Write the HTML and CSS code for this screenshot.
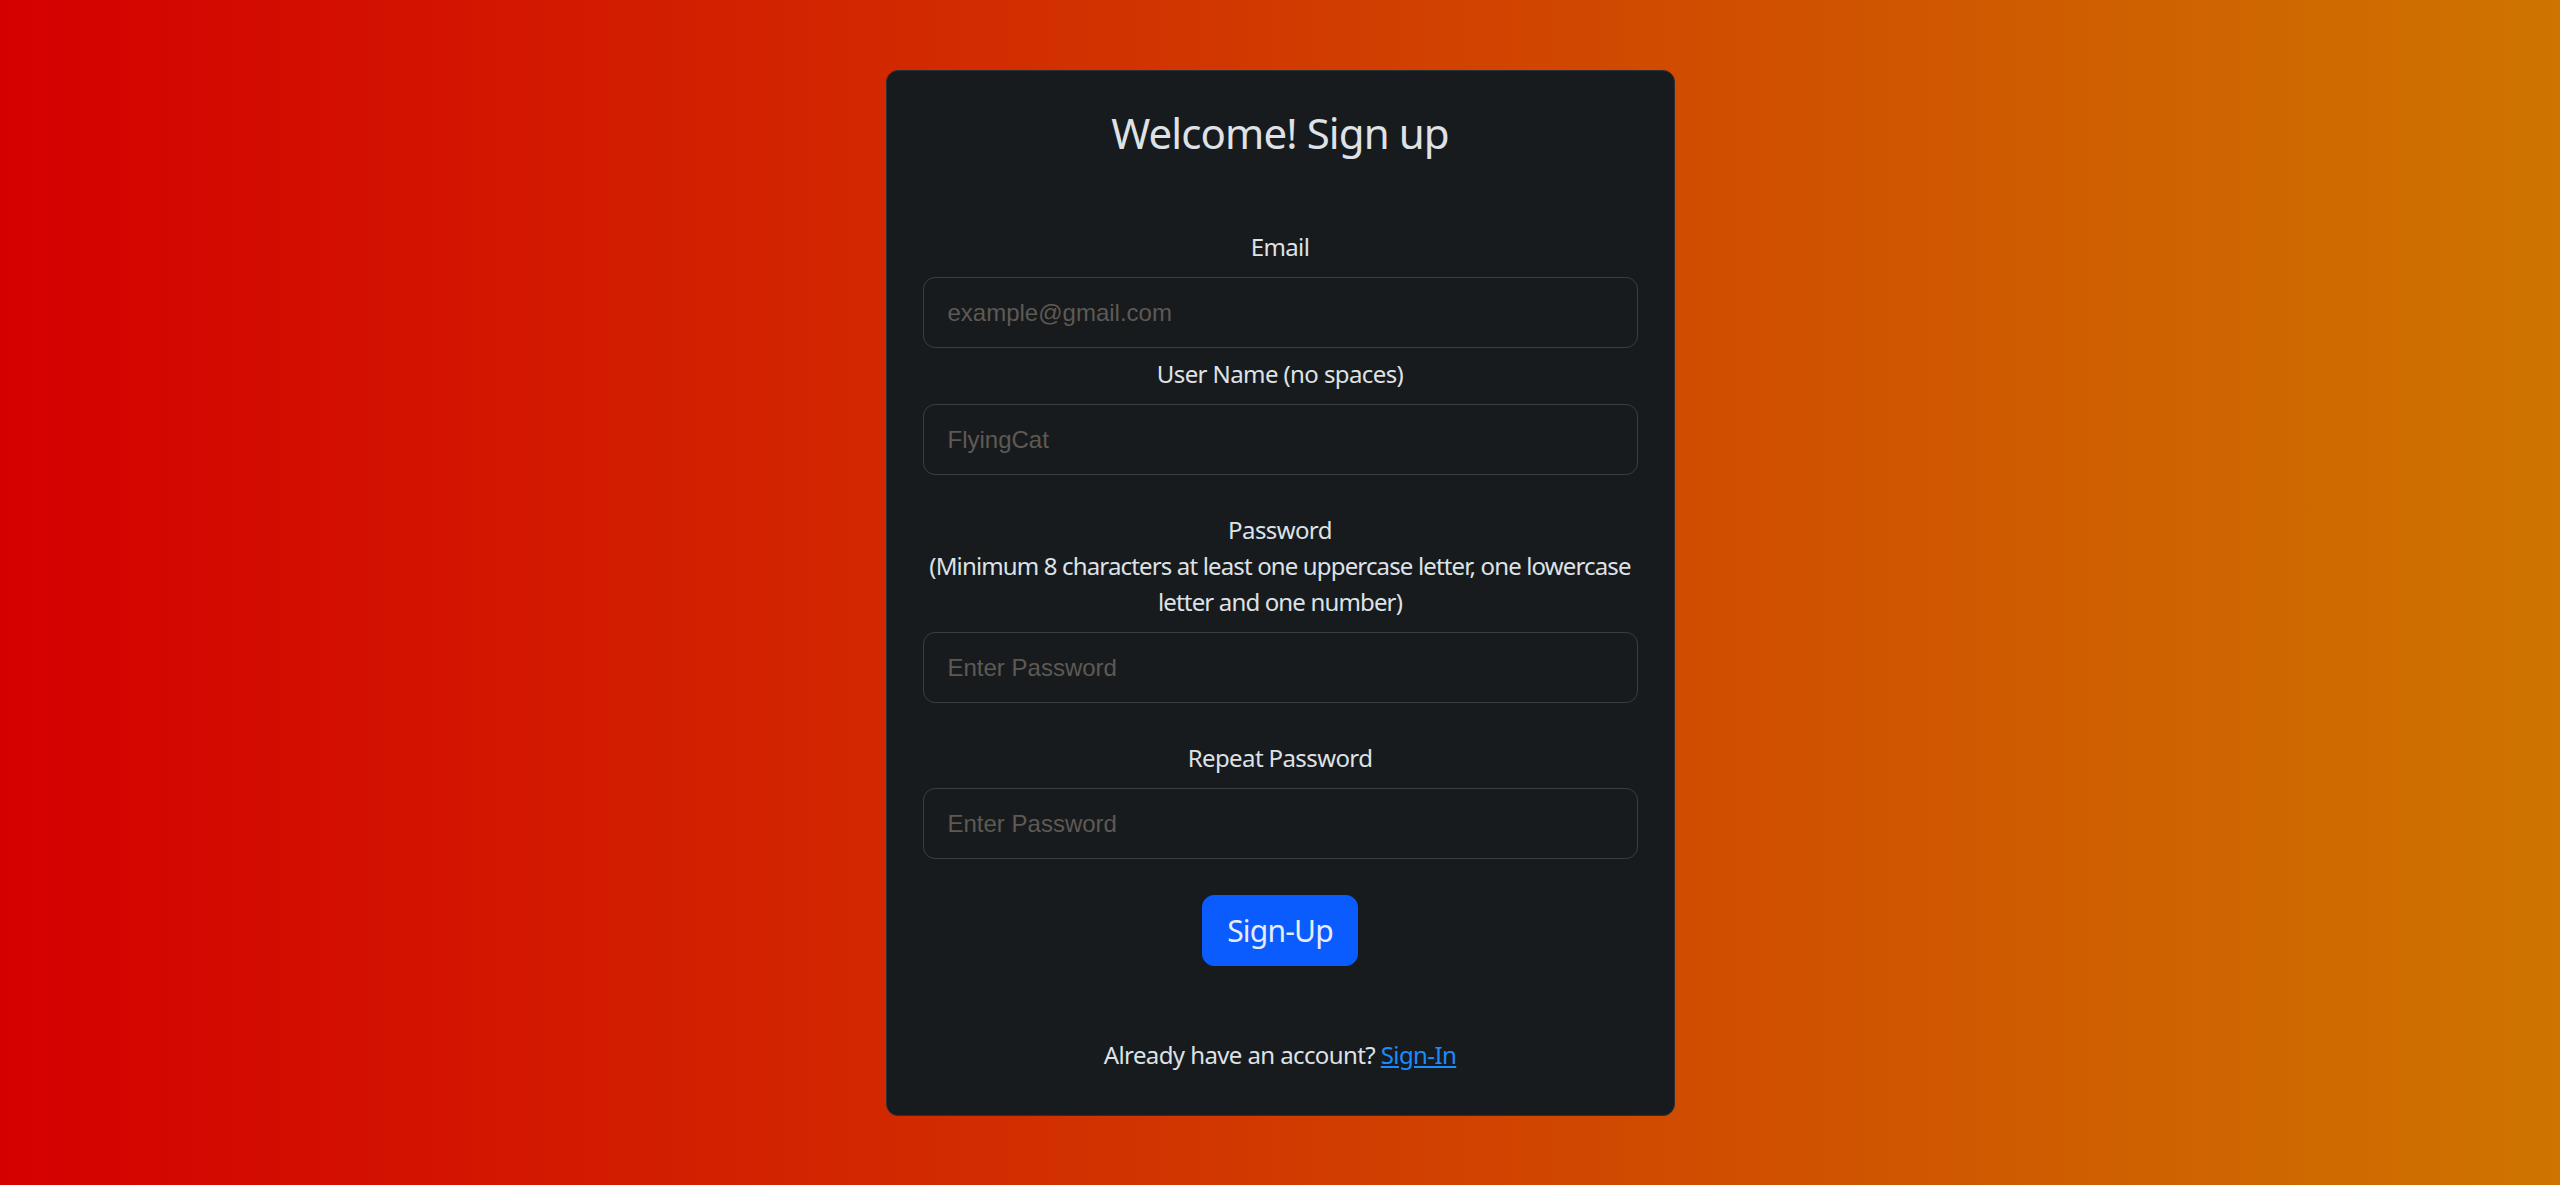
FILE: index.html
```html
<!DOCTYPE html>
<html lang="en">

<head>
    <meta charset="UTF-8">
    <meta name="viewport" content="width=device-width, initial-scale=1.0">
    <title>Sign up</title>
    <link rel="stylesheet" href="styles.css">
</head>

<body>
    <div class="page">
        <form class="card">
            <h3 class="title">Welcome! Sign up</h3>

            <div class="group first">
                <label class="label" for="email">Email</label>
                <input class="field" type="email" id="email" placeholder="example@gmail.com">
            </div>

            <div class="group tight">
                <label class="label" for="user">User Name (no spaces)</label>
                <input class="field" type="text" id="user" placeholder="FlyingCat">
            </div>

            <div class="group">
                <label class="label" for="pass">Password<br><span class="hint">(Minimum 8 characters at least one uppercase letter, one lowercase letter and one number)</span></label>
                <input class="field" type="password" id="pass" placeholder="Enter Password">
            </div>

            <div class="group">
                <label class="label" for="pass2">Repeat Password</label>
                <input class="field" type="password" id="pass2" placeholder="Enter Password">
            </div>

            <div class="actions">
                <button class="btn" type="button">Sign-Up</button>
            </div>

            <p class="footer">Already have an account? <a href="#">Sign-In</a></p>
        </form>
    </div>
</body>

</html>
```

FILE: styles.css
```css
html,
body {
    margin: 0;
    padding: 0;
}

body {
    min-height: 100vh;
    background: linear-gradient(to right, #d40000, #ce7400);
    font-family: "Noto Sans", "Open Sans", sans-serif;
    color: #dee2e6;
}

.page {
    display: flex;
    justify-content: center;
    padding-top: 70px;
}

.card {
    box-sizing: border-box;
    width: 789px;
    padding: 36px 36px 42px;
    background: #181b1e;
    border: 1px solid #2c3034;
    border-radius: 12px;
}

.title {
    margin: 1px 0 0;
    font-size: 42px;
    font-weight: 400;
    line-height: 50px;
    letter-spacing: -0.9px;
    text-align: center;
    color: #dee2e6;
}

.group {
    margin-top: 37px;
}

.group.first {
    margin-top: 71px;
}

.group.tight {
    margin-top: 8px;
}

.label {
    display: block;
    margin: 0 -4px 12px;
    font-size: 24px;
    line-height: 36px;
    letter-spacing: -0.6px;
    text-align: center;
}

.hint {
    letter-spacing: -0.85px;
}

.field {
    display: block;
    box-sizing: border-box;
    width: 100%;
    height: 71px;
    padding: 0 24px;
    background: #181b1e;
    border: 1px solid #3a3e43;
    border-radius: 12px;
    font-family: "Liberation Sans", Arial, sans-serif;
    font-size: 24px;
    color: #dee2e6;
    outline: none;
}

.field::placeholder {
    color: #5e5953;
}

.actions {
    display: flex;
    justify-content: center;
    margin-top: 36px;
}

.btn {
    height: 71px;
    padding: 0 24px;
    background: #0b5cff;
    border: 1px solid #0b5cff;
    border-radius: 12px;
    font-family: "Noto Sans", "Open Sans", sans-serif;
    font-size: 30px;
    line-height: 45px;
    letter-spacing: -0.8px;
    color: #e8ecf2;
    cursor: pointer;
}

.footer {
    margin: 71px 0 0;
    font-size: 24px;
    line-height: 36px;
    letter-spacing: -0.6px;
    text-align: center;
}

.footer a {
    color: #1a8cff;
}
```
